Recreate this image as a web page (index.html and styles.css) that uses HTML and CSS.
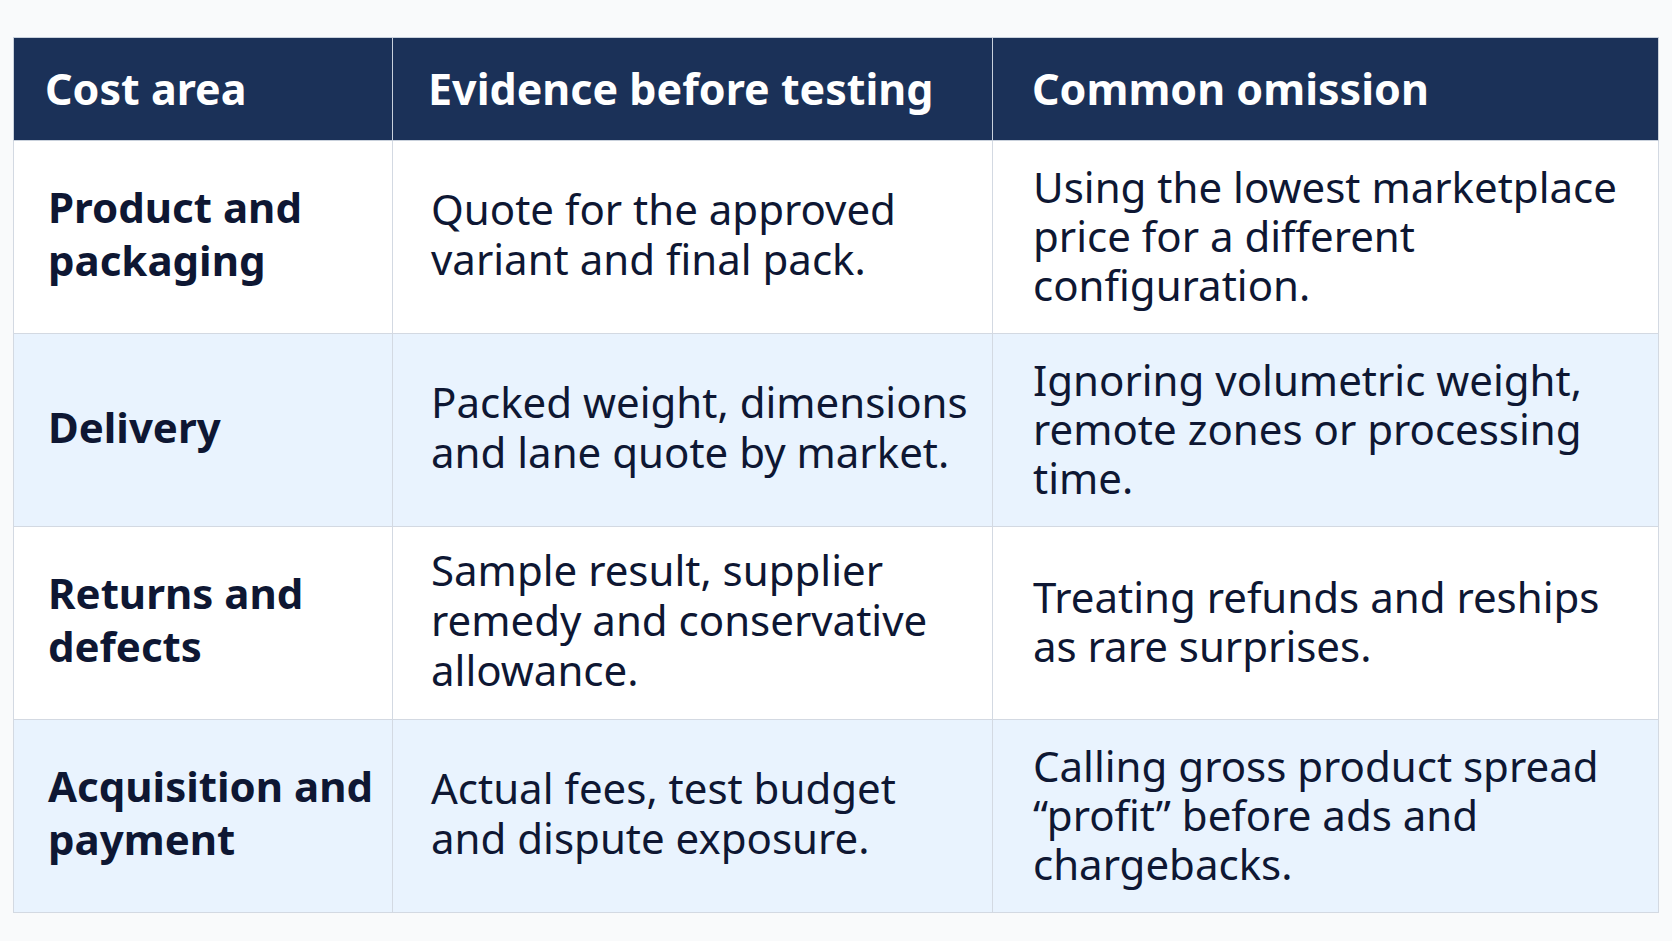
FILE: index.html
```html
<!DOCTYPE html>
<html lang="en">
<head>
<meta charset="utf-8">
<title>Cost areas</title>
<link rel="stylesheet" href="styles.css">
</head>
<body>
<table class="cost-table">
  <colgroup>
    <col class="c1"><col class="c2"><col class="c3">
  </colgroup>
  <thead>
    <tr>
      <th class="h1">Cost area</th>
      <th class="h2">Evidence before testing</th>
      <th class="h3">Common omission</th>
    </tr>
  </thead>
  <tbody>
    <tr>
      <td class="area">Product and packaging</td>
      <td class="evidence">Quote for the approved variant and final pack.</td>
      <td class="omission">Using the lowest marketplace price for a different configuration.</td>
    </tr>
    <tr class="alt">
      <td class="area">Delivery</td>
      <td class="evidence">Packed weight, dimensions and lane quote by market.</td>
      <td class="omission">Ignoring volumetric weight, remote zones or processing time.</td>
    </tr>
    <tr>
      <td class="area">Returns and defects</td>
      <td class="evidence">Sample result, supplier remedy and conservative allowance.</td>
      <td class="omission">Treating refunds and reships as rare surprises.</td>
    </tr>
    <tr class="alt">
      <td class="area">Acquisition and payment</td>
      <td class="evidence">Actual fees, test budget and dispute exposure.</td>
      <td class="omission">Calling gross product spread “profit” before ads and chargebacks.</td>
    </tr>
  </tbody>
</table>
</body>
</html>
```

FILE: styles.css
```css
html, body {
  margin: 0;
  padding: 0;
  background: #f9fafb;
}
body {
  padding: 37px 0 0 13px;
  font-family: "Noto Sans", "Open Sans", sans-serif;
  color: #0e1733;
}
.cost-table {
  border-collapse: collapse;
  table-layout: fixed;
  width: 1645px;
}
.c1 { width: 379px; }
.c2 { width: 600px; }
.c3 { width: 666px; }
.cost-table th {
  background: #1b3158;
  color: #ffffff;
  font-weight: 700;
  font-size: 43px;
  text-align: left;
  height: 103px;
  box-sizing: border-box;
  border: 1px solid #c9d1dc;
  line-height: 1.2;
}
.cost-table th.h1 { padding: 0 20px 0 31px; }
.cost-table th.h2 { padding: 0 20px 0 35px; }
.cost-table th.h3 { padding: 0 20px 0 39px; }
.cost-table td {
  font-size: 42px;
  vertical-align: middle;
  border: 1px solid #d3d9e2;
  background: #ffffff;
  font-weight: 400;
}
.cost-table tr.alt td {
  background: #e9f3fe;
}
.cost-table tbody tr {
  height: 193px;
}
.cost-table td.area {
  font-weight: 700;
  font-size: 42px;
  line-height: 53px;
  padding: 0 8px 8px 34px;
}
.cost-table td.evidence {
  line-height: 50px;
  padding: 0 20px 7px 38px;
}
.cost-table td.omission {
  line-height: 49px;
  padding: 0 30px 4px 40px;
}
```
